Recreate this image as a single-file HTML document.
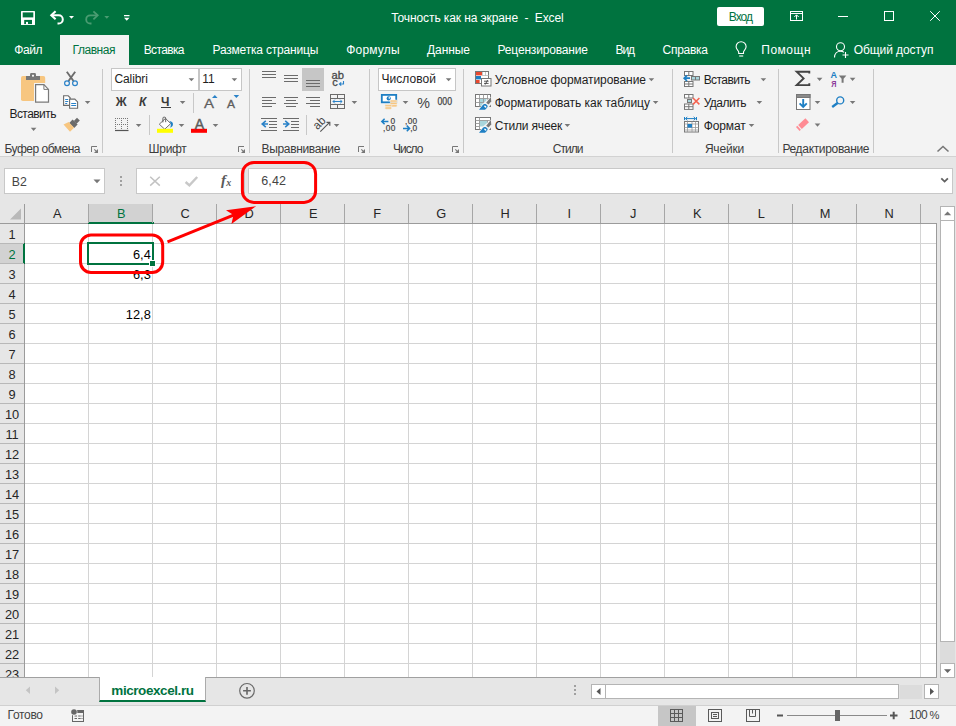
<!DOCTYPE html><html><head><meta charset="utf-8"><title>Excel</title><style>
*{margin:0;padding:0;box-sizing:border-box}
html,body{width:956px;height:726px;overflow:hidden;background:#fff}
body{font-family:"Liberation Sans",sans-serif;font-size:12px;color:#262626;position:relative}
.a{position:absolute}
.t{position:absolute;white-space:pre}
.sep{position:absolute;width:1px;background:#c8c8c8}
.ch{position:absolute;top:204px;height:19px;line-height:19px;text-align:center}
svg{position:absolute;left:0;top:0;overflow:visible}
</style></head><body>
<div class="a" style="left:0;top:0;width:956px;height:65px;background:#00733f"></div>
<div class="a" style="left:60px;top:35px;width:69px;height:30px;background:#f3f3f3"></div>
<div class="t" style="left:391.25px;top:11.84px;font-size:12px;line-height:12px;color:#fff;letter-spacing:-0.098px">Точность как на экране  -  Excel</div>
<div class="a" style="left:717px;top:7px;width:47px;height:19px;background:#fff;border-radius:2px"></div>
<div class="t" style="left:728.75px;top:11.14px;font-size:12px;line-height:12px;color:#00733f;letter-spacing:-0.965px">Вход</div>
<div class="t" style="left:14.25px;top:43.84px;font-size:12px;line-height:12px;color:#fff;letter-spacing:-0.417px">Файл</div>
<div class="t" style="left:72.50px;top:43.84px;font-size:12px;line-height:12px;color:#00733f;letter-spacing:-0.446px">Главная</div>
<div class="t" style="left:143.75px;top:43.84px;font-size:12px;line-height:12px;color:#fff;letter-spacing:-0.642px">Вставка</div>
<div class="t" style="left:212.50px;top:43.84px;font-size:12px;line-height:12px;color:#fff;letter-spacing:-0.194px">Разметка страницы</div>
<div class="t" style="left:346.25px;top:43.84px;font-size:12px;line-height:12px;color:#fff;letter-spacing:0.172px">Формулы</div>
<div class="t" style="left:427.00px;top:43.84px;font-size:12px;line-height:12px;color:#fff;letter-spacing:-0.070px">Данные</div>
<div class="t" style="left:497.50px;top:43.84px;font-size:12px;line-height:12px;color:#fff;letter-spacing:-0.166px">Рецензирование</div>
<div class="t" style="left:615.50px;top:43.84px;font-size:12px;line-height:12px;color:#fff;letter-spacing:-1.104px">Вид</div>
<div class="t" style="left:662.50px;top:43.84px;font-size:12px;line-height:12px;color:#fff;letter-spacing:-0.262px">Справка</div>
<div class="t" style="left:761.25px;top:43.84px;font-size:12px;line-height:12px;color:#fff;letter-spacing:0.506px">Помощн</div>
<div class="t" style="left:853.80px;top:43.84px;font-size:12px;line-height:12px;color:#fff;letter-spacing:-0.084px">Общий доступ</div>
<div class="a" style="left:0;top:65px;width:956px;height:92px;background:#f3f3f3;border-bottom:1px solid #d2d2d2"></div>
<div class="sep" style="left:102px;top:69px;height:84px"></div>
<div class="sep" style="left:249px;top:69px;height:84px"></div>
<div class="sep" style="left:369px;top:69px;height:84px"></div>
<div class="sep" style="left:463px;top:69px;height:84px"></div>
<div class="sep" style="left:672px;top:69px;height:84px"></div>
<div class="sep" style="left:778px;top:69px;height:84px"></div>
<div class="sep" style="left:873px;top:69px;height:84px"></div>
<div class="sep" style="left:193px;top:93px;height:20px"></div>
<div class="sep" style="left:149px;top:115px;height:20px"></div>
<div class="sep" style="left:306px;top:115px;height:20px"></div>
<div class="t" style="left:4.40px;top:142.84px;font-size:12px;line-height:12px;color:#3c3c3c;letter-spacing:-0.494px">Буфер обмена</div>
<div class="t" style="left:148.60px;top:142.84px;font-size:12px;line-height:12px;color:#3c3c3c;letter-spacing:-0.320px">Шрифт</div>
<div class="t" style="left:261.50px;top:142.84px;font-size:12px;line-height:12px;color:#3c3c3c;letter-spacing:-0.336px">Выравнивание</div>
<div class="t" style="left:393.00px;top:142.84px;font-size:12px;line-height:12px;color:#3c3c3c;letter-spacing:-1.028px">Число</div>
<div class="t" style="left:552.70px;top:142.84px;font-size:12px;line-height:12px;color:#3c3c3c;letter-spacing:-0.942px">Стили</div>
<div class="t" style="left:704.90px;top:142.84px;font-size:12px;line-height:12px;color:#3c3c3c;letter-spacing:-0.189px">Ячейки</div>
<div class="t" style="left:782.40px;top:142.84px;font-size:12px;line-height:12px;color:#3c3c3c;letter-spacing:-0.331px">Редактирование</div>
<div class="t" style="left:9.50px;top:107.54px;font-size:12px;line-height:12px;color:#1e1e1e;letter-spacing:-0.566px">Вставить</div>
<div class="a" style="left:111px;top:68px;width:88px;height:23px;background:#fff;border:1px solid #c6c6c6"></div>
<div class="a" style="left:199px;top:68px;width:43px;height:23px;background:#fff;border:1px solid #c6c6c6"></div>
<div class="a" style="left:378px;top:68px;width:78px;height:23px;background:#fff;border:1px solid #c6c6c6"></div>
<div class="t" style="left:114.40px;top:73.44px;font-size:12px;line-height:12px;color:#1e1e1e;letter-spacing:-0.084px">Calibri</div>
<div class="t" style="left:202.20px;top:73.44px;font-size:12px;line-height:12px;color:#1e1e1e;letter-spacing:0.000px">11</div>
<div class="t" style="left:381.50px;top:73.44px;font-size:12px;line-height:12px;color:#1e1e1e;letter-spacing:0.053px">Числовой</div>
<div class="t" style="left:115.70px;top:95.84px;font-size:12px;line-height:12px;color:#3b3b3b;letter-spacing:2.155px;font-weight:bold">Ж</div>
<div class="t" style="left:139.00px;top:95.84px;font-size:12px;line-height:12px;color:#3b3b3b;letter-spacing:1.024px;font-weight:bold;font-style:italic">К</div>
<div class="t" style="left:161.00px;top:95.84px;font-size:12px;line-height:12px;color:#3b3b3b;letter-spacing:1.168px;font-weight:bold">Ч</div>
<div class="a" style="left:161px;top:107px;width:10px;height:1px;background:#3b3b3b"></div>
<div class="t" style="left:494.70px;top:73.84px;font-size:12px;line-height:12px;color:#1e1e1e;letter-spacing:-0.061px">Условное форматирование</div>
<div class="t" style="left:494.70px;top:96.84px;font-size:12px;line-height:12px;color:#1e1e1e;letter-spacing:-0.038px">Форматировать как таблицу</div>
<div class="t" style="left:494.70px;top:119.84px;font-size:12px;line-height:12px;color:#1e1e1e;letter-spacing:-0.175px">Стили ячеек</div>
<div class="t" style="left:703.70px;top:73.84px;font-size:12px;line-height:12px;color:#1e1e1e;letter-spacing:-0.580px">Вставить</div>
<div class="t" style="left:703.70px;top:96.84px;font-size:12px;line-height:12px;color:#1e1e1e;letter-spacing:-0.502px">Удалить</div>
<div class="t" style="left:703.70px;top:119.84px;font-size:12px;line-height:12px;color:#1e1e1e;letter-spacing:-0.105px">Формат</div>
<div class="a" style="left:0;top:157px;width:956px;height:47px;background:#e6e6e6"></div>
<div class="a" style="left:4px;top:168px;width:101px;height:26px;background:#fff;border:1px solid #c8c8c8"></div>
<div class="t" style="left:11.80px;top:175.59px;font-size:12.3px;line-height:12.3px;color:#444;letter-spacing:0.000px">B2</div>
<div class="a" style="left:136px;top:168px;width:109px;height:26px;background:#fff;border:1px solid #c8c8c8"></div>
<div class="a" style="left:248px;top:168px;width:705px;height:26px;background:#fff;border:1px solid #c8c8c8"></div>
<div class="t" style="left:261.20px;top:175.42px;font-size:12.5px;line-height:12.5px;color:#444;letter-spacing:0.158px">6,42</div>
<div class="a" style="left:0;top:204px;width:956px;height:473px;background:#e6e6e6"></div>
<div class="a" style="left:25px;top:224px;width:912px;height:453px;background-color:#fff;background-image:linear-gradient(to right,#d4d4d4 1px,transparent 1px),linear-gradient(to bottom,#d4d4d4 1px,transparent 1px);background-size:64px 20px,64px 20px;background-position:63px 0,0 19px"></div>
<div class="a" style="left:0;top:223px;width:937px;height:1px;background:#9b9b9b"></div>
<div class="a" style="left:24px;top:204px;width:1px;height:473px;background:#9b9b9b"></div>
<div class="a" style="left:936px;top:223px;width:1px;height:454px;background:#9b9b9b"></div>
<div class="a" style="left:89px;top:204px;width:63px;height:19px;background:#d2d2d2"></div>
<div class="a" style="left:88px;top:222px;width:66px;height:2px;background:#00733f"></div>
<div class="a" style="left:0;top:244px;width:24px;height:19px;background:#d2d2d2"></div>
<div class="a" style="left:23px;top:243px;width:2px;height:21px;background:#00733f"></div>
<div class="a" style="left:27.20px;top:207.86px;width:60px;text-align:center;font-size:12.8px;line-height:12.8px;color:#262626;white-space:pre">A</div>
<div class="a" style="left:88px;top:204px;width:1px;height:19px;background:#a6a6a6"></div>
<div class="a" style="left:91.20px;top:207.86px;width:60px;text-align:center;font-size:12.8px;line-height:12.8px;color:#00733f;white-space:pre">B</div>
<div class="a" style="left:152px;top:204px;width:1px;height:19px;background:#a6a6a6"></div>
<div class="a" style="left:155.20px;top:207.86px;width:60px;text-align:center;font-size:12.8px;line-height:12.8px;color:#262626;white-space:pre">C</div>
<div class="a" style="left:216px;top:204px;width:1px;height:19px;background:#a6a6a6"></div>
<div class="a" style="left:219.20px;top:207.86px;width:60px;text-align:center;font-size:12.8px;line-height:12.8px;color:#262626;white-space:pre">D</div>
<div class="a" style="left:280px;top:204px;width:1px;height:19px;background:#a6a6a6"></div>
<div class="a" style="left:283.20px;top:207.86px;width:60px;text-align:center;font-size:12.8px;line-height:12.8px;color:#262626;white-space:pre">E</div>
<div class="a" style="left:344px;top:204px;width:1px;height:19px;background:#a6a6a6"></div>
<div class="a" style="left:347.20px;top:207.86px;width:60px;text-align:center;font-size:12.8px;line-height:12.8px;color:#262626;white-space:pre">F</div>
<div class="a" style="left:408px;top:204px;width:1px;height:19px;background:#a6a6a6"></div>
<div class="a" style="left:411.20px;top:207.86px;width:60px;text-align:center;font-size:12.8px;line-height:12.8px;color:#262626;white-space:pre">G</div>
<div class="a" style="left:472px;top:204px;width:1px;height:19px;background:#a6a6a6"></div>
<div class="a" style="left:475.20px;top:207.86px;width:60px;text-align:center;font-size:12.8px;line-height:12.8px;color:#262626;white-space:pre">H</div>
<div class="a" style="left:536px;top:204px;width:1px;height:19px;background:#a6a6a6"></div>
<div class="a" style="left:539.20px;top:207.86px;width:60px;text-align:center;font-size:12.8px;line-height:12.8px;color:#262626;white-space:pre">I</div>
<div class="a" style="left:600px;top:204px;width:1px;height:19px;background:#a6a6a6"></div>
<div class="a" style="left:603.20px;top:207.86px;width:60px;text-align:center;font-size:12.8px;line-height:12.8px;color:#262626;white-space:pre">J</div>
<div class="a" style="left:664px;top:204px;width:1px;height:19px;background:#a6a6a6"></div>
<div class="a" style="left:667.20px;top:207.86px;width:60px;text-align:center;font-size:12.8px;line-height:12.8px;color:#262626;white-space:pre">K</div>
<div class="a" style="left:728px;top:204px;width:1px;height:19px;background:#a6a6a6"></div>
<div class="a" style="left:731.20px;top:207.86px;width:60px;text-align:center;font-size:12.8px;line-height:12.8px;color:#262626;white-space:pre">L</div>
<div class="a" style="left:792px;top:204px;width:1px;height:19px;background:#a6a6a6"></div>
<div class="a" style="left:795.20px;top:207.86px;width:60px;text-align:center;font-size:12.8px;line-height:12.8px;color:#262626;white-space:pre">M</div>
<div class="a" style="left:856px;top:204px;width:1px;height:19px;background:#a6a6a6"></div>
<div class="a" style="left:859.20px;top:207.86px;width:60px;text-align:center;font-size:12.8px;line-height:12.8px;color:#262626;white-space:pre">N</div>
<div class="a" style="left:920px;top:204px;width:1px;height:19px;background:#a6a6a6"></div>
<div class="a" style="left:0.10px;top:228.86px;width:24px;text-align:center;font-size:12.8px;line-height:12.8px;color:#262626;white-space:pre">1</div>
<div class="a" style="left:0;top:243px;width:24px;height:1px;background:#b8b8b8"></div>
<div class="a" style="left:0.10px;top:248.86px;width:24px;text-align:center;font-size:12.8px;line-height:12.8px;color:#00733f;white-space:pre">2</div>
<div class="a" style="left:0;top:263px;width:24px;height:1px;background:#b8b8b8"></div>
<div class="a" style="left:0.10px;top:268.86px;width:24px;text-align:center;font-size:12.8px;line-height:12.8px;color:#262626;white-space:pre">3</div>
<div class="a" style="left:0;top:283px;width:24px;height:1px;background:#b8b8b8"></div>
<div class="a" style="left:0.10px;top:288.86px;width:24px;text-align:center;font-size:12.8px;line-height:12.8px;color:#262626;white-space:pre">4</div>
<div class="a" style="left:0;top:303px;width:24px;height:1px;background:#b8b8b8"></div>
<div class="a" style="left:0.10px;top:308.86px;width:24px;text-align:center;font-size:12.8px;line-height:12.8px;color:#262626;white-space:pre">5</div>
<div class="a" style="left:0;top:323px;width:24px;height:1px;background:#b8b8b8"></div>
<div class="a" style="left:0.10px;top:328.86px;width:24px;text-align:center;font-size:12.8px;line-height:12.8px;color:#262626;white-space:pre">6</div>
<div class="a" style="left:0;top:343px;width:24px;height:1px;background:#b8b8b8"></div>
<div class="a" style="left:0.10px;top:348.86px;width:24px;text-align:center;font-size:12.8px;line-height:12.8px;color:#262626;white-space:pre">7</div>
<div class="a" style="left:0;top:363px;width:24px;height:1px;background:#b8b8b8"></div>
<div class="a" style="left:0.10px;top:368.86px;width:24px;text-align:center;font-size:12.8px;line-height:12.8px;color:#262626;white-space:pre">8</div>
<div class="a" style="left:0;top:383px;width:24px;height:1px;background:#b8b8b8"></div>
<div class="a" style="left:0.10px;top:388.86px;width:24px;text-align:center;font-size:12.8px;line-height:12.8px;color:#262626;white-space:pre">9</div>
<div class="a" style="left:0;top:403px;width:24px;height:1px;background:#b8b8b8"></div>
<div class="a" style="left:0.10px;top:408.86px;width:24px;text-align:center;font-size:12.8px;line-height:12.8px;color:#262626;white-space:pre">10</div>
<div class="a" style="left:0;top:423px;width:24px;height:1px;background:#b8b8b8"></div>
<div class="a" style="left:0.10px;top:428.86px;width:24px;text-align:center;font-size:12.8px;line-height:12.8px;color:#262626;white-space:pre">11</div>
<div class="a" style="left:0;top:443px;width:24px;height:1px;background:#b8b8b8"></div>
<div class="a" style="left:0.10px;top:448.86px;width:24px;text-align:center;font-size:12.8px;line-height:12.8px;color:#262626;white-space:pre">12</div>
<div class="a" style="left:0;top:463px;width:24px;height:1px;background:#b8b8b8"></div>
<div class="a" style="left:0.10px;top:468.86px;width:24px;text-align:center;font-size:12.8px;line-height:12.8px;color:#262626;white-space:pre">13</div>
<div class="a" style="left:0;top:483px;width:24px;height:1px;background:#b8b8b8"></div>
<div class="a" style="left:0.10px;top:488.86px;width:24px;text-align:center;font-size:12.8px;line-height:12.8px;color:#262626;white-space:pre">14</div>
<div class="a" style="left:0;top:503px;width:24px;height:1px;background:#b8b8b8"></div>
<div class="a" style="left:0.10px;top:508.86px;width:24px;text-align:center;font-size:12.8px;line-height:12.8px;color:#262626;white-space:pre">15</div>
<div class="a" style="left:0;top:523px;width:24px;height:1px;background:#b8b8b8"></div>
<div class="a" style="left:0.10px;top:528.86px;width:24px;text-align:center;font-size:12.8px;line-height:12.8px;color:#262626;white-space:pre">16</div>
<div class="a" style="left:0;top:543px;width:24px;height:1px;background:#b8b8b8"></div>
<div class="a" style="left:0.10px;top:548.86px;width:24px;text-align:center;font-size:12.8px;line-height:12.8px;color:#262626;white-space:pre">17</div>
<div class="a" style="left:0;top:563px;width:24px;height:1px;background:#b8b8b8"></div>
<div class="a" style="left:0.10px;top:568.86px;width:24px;text-align:center;font-size:12.8px;line-height:12.8px;color:#262626;white-space:pre">18</div>
<div class="a" style="left:0;top:583px;width:24px;height:1px;background:#b8b8b8"></div>
<div class="a" style="left:0.10px;top:588.86px;width:24px;text-align:center;font-size:12.8px;line-height:12.8px;color:#262626;white-space:pre">19</div>
<div class="a" style="left:0;top:603px;width:24px;height:1px;background:#b8b8b8"></div>
<div class="a" style="left:0.10px;top:608.86px;width:24px;text-align:center;font-size:12.8px;line-height:12.8px;color:#262626;white-space:pre">20</div>
<div class="a" style="left:0;top:623px;width:24px;height:1px;background:#b8b8b8"></div>
<div class="a" style="left:0.10px;top:628.86px;width:24px;text-align:center;font-size:12.8px;line-height:12.8px;color:#262626;white-space:pre">21</div>
<div class="a" style="left:0;top:643px;width:24px;height:1px;background:#b8b8b8"></div>
<div class="a" style="left:0.10px;top:648.86px;width:24px;text-align:center;font-size:12.8px;line-height:12.8px;color:#262626;white-space:pre">22</div>
<div class="a" style="left:0;top:663px;width:24px;height:1px;background:#b8b8b8"></div>
<div class="a" style="left:0.10px;top:668.86px;width:24px;text-align:center;font-size:12.8px;line-height:12.8px;color:#262626;white-space:pre">23</div>
<div class="a" style="left:0;top:683px;width:24px;height:1px;background:#b8b8b8"></div>
<div class="a" style="left:89.20px;top:248.86px;width:61.6px;text-align:right;font-size:12.8px;line-height:12.8px;color:#000;white-space:pre">6,4</div>
<div class="a" style="left:89.20px;top:268.86px;width:61.6px;text-align:right;font-size:12.8px;line-height:12.8px;color:#000;white-space:pre">6,3</div>
<div class="a" style="left:89.20px;top:308.86px;width:61.6px;text-align:right;font-size:12.8px;line-height:12.8px;color:#000;white-space:pre">12,8</div>
<div class="a" style="left:87px;top:242px;width:67px;height:23px;border:2px solid #00733f"></div>
<div class="a" style="left:149px;top:260px;width:7px;height:7px;background:#fff"></div>
<div class="a" style="left:150px;top:261px;width:5px;height:5px;background:#00733f"></div>
<div class="a" style="left:0;top:677px;width:956px;height:28px;background:#e6e6e6"></div>
<div class="a" style="left:0;top:677px;width:937px;height:1px;background:#a0a0a0"></div>
<div class="a" style="left:99px;top:677px;width:107px;height:25px;background:#fff;border-left:1px solid #ababab;border-right:1px solid #ababab;border-bottom:2px solid #00733f"></div>
<div class="t" style="left:111.30px;top:683.97px;font-size:13.5px;line-height:13.5px;color:#00733f;letter-spacing:-0.424px;font-weight:bold">microexcel.ru</div>
<div class="a" style="left:0;top:705px;width:956px;height:21px;background:#f3f3f3;border-top:1px solid #d0d0d0"></div>
<div class="t" style="left:7.60px;top:708.84px;font-size:12px;line-height:12px;color:#444;letter-spacing:-0.330px">Готово</div>
<div class="t" style="left:909.00px;top:708.84px;font-size:12px;line-height:12px;color:#444;letter-spacing:-0.710px">100</div>
<div class="t" style="left:929.60px;top:709.52px;font-size:11.2px;line-height:11.2px;color:#444;letter-spacing:0.000px">%</div>
<svg width="956" height="726" viewBox="0 0 956 726">
<defs>
  <path id="dd" d="M0 0h5.600l-2.800 3.100z" fill="#777"/>
  <g id="ln"><path d="M0.500 6v-5.500h5.500" fill="none" stroke="#777" stroke-width="1"/><path d="M3.300 3.300l3 3" fill="none" stroke="#777" stroke-width="1.100"/><path d="M7 3v4h-4z" fill="#777"/></g>
</defs>
<!-- ===== clipboard group ===== -->
<rect x="21" y="76" width="24.200" height="25" rx="1.800" fill="#f7c680"/>
<rect x="26" y="76" width="14" height="4" fill="#777"/>
<path d="M30 76.500v-2a1.400 1.400 0 0 1 1.400-1.400h3.200a1.400 1.400 0 0 1 1.400 1.400v2z" fill="#777"/>
<rect x="32" y="74.800" width="2" height="1.800" fill="#f3f3f3"/>
<rect x="34" y="83" width="16" height="20.800" fill="#f3f3f3"/>
<path d="M35.600 84.600h8.300l4.600 4.800v12.800h-12.900z" fill="#fff" stroke="#7a7a7a" stroke-width="1.200"/>
<path d="M43.900 84.600v4.800h4.600" fill="none" stroke="#7a7a7a" stroke-width="1"/>
<use href="#dd" x="30.800" y="127.800"/>
<!-- scissors -->
<path d="M66.800 71.800l6.700 9.200M75.200 71.800l-6.700 9.200" stroke="#6b6b6b" stroke-width="1.900" fill="none"/>
<circle cx="67" cy="83.300" r="2.400" fill="none" stroke="#2a82c8" stroke-width="1.200"/>
<circle cx="75" cy="83.300" r="2.400" fill="none" stroke="#2a82c8" stroke-width="1.200"/>
<!-- copy -->
<path d="M63.600 95.800h4.600l2 2v7.600h-6.600z" fill="#fff" stroke="#6b6b6b" stroke-width="1.100"/>
<path d="M65.200 99.500h3M65.200 101.500h3M65.200 103.500h2" stroke="#2a82c8" stroke-width="1" fill="none"/>
<path d="M69.600 99.100h5.200l2.800 2.800v6.300h-8z" fill="#fff" stroke="#6b6b6b" stroke-width="1.100"/>
<path d="M71.200 103.500h5M71.200 105.500h5" stroke="#2a82c8" stroke-width="1" fill="none"/>
<use href="#dd" x="84.800" y="101"/>
<!-- format painter -->
<path d="M77 117.800l2.800 2.800l-3.200 3.200l-2.800-2.800z" fill="#6b6b6b"/>
<path d="M72.600 119.600l5 5l-3.400 3.400l-5-5z" fill="#6b6b6b"/>
<path d="M63.500 124.500l5.200-2.400l5.400 5.600l-4.100 4z" fill="#f7c680"/>
<!-- launchers -->
<use href="#ln" x="91" y="146"/>
<use href="#ln" x="238" y="146"/>
<use href="#ln" x="358" y="146"/>
<use href="#ln" x="452" y="146"/>

<!-- ===== font group ===== -->
<use href="#dd" x="188.600" y="78.200"/>
<use href="#dd" x="231.600" y="78.200"/>
<use href="#dd" x="179.800" y="101"/>
<path d="M212 97.900h5.600l-2.800-3z" fill="#2a82c8"/>
<path d="M233.600 95h5.600l-2.800 3z" fill="#2a82c8"/>
<!-- borders icon -->
<g stroke="#777" stroke-width="1" stroke-dasharray="1 1" fill="none">
  <path d="M115 118.500h13.500M115 124.500h13.500M115.500 118v11M121.500 118v11M127.500 118v11"/>
</g>
<path d="M115 130.500h13.500" stroke="#555" stroke-width="1.200"/>
<use href="#dd" x="135.800" y="124"/>
<!-- fill bucket -->
<path d="M165.500 118.400l5.200 5.200l-6 5.600l-5.400-5z" fill="#fff" stroke="#707070" stroke-width="1"/>
<path d="M162.900 122.400v-4.200a1 1 0 0 1 1-1h0.800a1 1 0 0 1 1 1v4" fill="none" stroke="#606060" stroke-width="1"/>
<path d="M169.400 121.100c2.600 0.300 4 2 3.500 4c-0.400 1.500-1.600 2.200-2.700 2.700c0.400-1.600 0.900-2.700 0.600-3.800c-0.200-1-0.700-2-1.400-2.900z" fill="#1e7fc4"/>
<rect x="157" y="128.800" width="16" height="4" fill="#ffff00"/>
<use href="#dd" x="178.700" y="124"/>
<!-- font color -->
<rect x="191" y="128.800" width="16" height="4" fill="#ff0000"/>
<use href="#dd" x="212.700" y="124"/>

<!-- ===== alignment group ===== -->
<rect x="302" y="68" width="22" height="23" fill="#c6c6c6"/>
<g stroke="#6b6b6b" stroke-width="1" fill="none">
  <path d="M262 71.500h14M262 74.500h14M262 77.500h14"/>
  <path d="M284 75.500h14M284 78.500h14M284 81.500h14"/>
  <path d="M306 80.500h14M306 83.500h14M306 86.500h14"/>
  <path d="M262 97.500h14M262 100.500h10M262 103.500h14M262 106.500h10"/>
  <path d="M284 97.500h14M286 100.500h10M284 103.500h14M286 106.500h10"/>
  <path d="M306 97.500h14M310 100.500h10M306 103.500h14M310 106.500h10"/>
  <!-- indent -->
  <path d="M261 118.500h16M269 121.500h8M269 124.500h8M269 127.500h8M261 130.500h16"/>
  <path d="M283 118.500h16M291 121.500h8M291 124.500h8M291 127.500h8M283 130.500h16"/>
  <!-- merge -->
  <rect x="330.500" y="94.500" width="14" height="14"/>
  <path d="M330.500 98.500h14M330.500 104.500h14M337.500 94.500v4M337.500 104.500v4"/>
</g>
<path d="M265.800 120.800l-3.600 3.200l3.600 3.200M262.500 124h5.500" stroke="#2a82c8" stroke-width="1.600" fill="none"/>
<path d="M285.200 120.800l3.600 3.200l-3.600 3.200M283 124h5.500" stroke="#2a82c8" stroke-width="1.600" fill="none"/>
<path d="M333 101.500h9M334.800 99.700l-1.800 1.800l1.800 1.800M340.200 99.700l1.800 1.800l-1.800 1.800" stroke="#2a82c8" stroke-width="1" fill="none"/>
<use href="#dd" x="351.600" y="101"/>
<!-- wrap text -->
<text x="331.500" y="79.200" font-family="Liberation Sans, sans-serif" font-size="11" fill="#4a4a4a" stroke="#4a4a4a" stroke-width="0.300" textLength="12.500" lengthAdjust="spacingAndGlyphs">ab</text>
<text x="332.300" y="86.200" font-family="Liberation Sans, sans-serif" font-size="11" fill="#4a4a4a" stroke="#4a4a4a" stroke-width="0.300">c</text>
<path d="M343.500 81v3h-4M341.200 82.300l-1.800 1.700l1.800 1.700" stroke="#2a82c8" stroke-width="1.100" fill="none"/>
<!-- orientation -->
<g transform="translate(317.500 130.200) rotate(-45)">
  <text x="0" y="0" font-family="Liberation Sans, sans-serif" font-size="12" fill="#444" textLength="12.600" lengthAdjust="spacingAndGlyphs">ab</text>
</g>
<path d="M320.300 131.700l9.300-9.300" stroke="#555" stroke-width="1.100" fill="none"/>
<path d="M326.500 122.400h3.300v3.300" stroke="#555" stroke-width="1.200" fill="none"/>
<use href="#dd" x="333.800" y="124"/>
</svg>

<svg width="956" height="726" viewBox="0 0 956 726" font-family="Liberation Sans, sans-serif">
<!-- ===== font A icons ===== -->
<text x="204" y="107.500" font-size="13.500" fill="#5e5e5e" stroke="#5e5e5e" stroke-width="0.300" textLength="10" lengthAdjust="spacingAndGlyphs">A</text>
<text x="227" y="107.500" font-size="10" fill="#5e5e5e" stroke="#5e5e5e" stroke-width="0.300" textLength="8" lengthAdjust="spacingAndGlyphs">A</text>
<text x="194.700" y="128.900" font-size="14" fill="#5a5a5a" stroke="#5a5a5a" stroke-width="0.400" textLength="9.400" lengthAdjust="spacingAndGlyphs">A</text>

<!-- ===== number group ===== -->
<use href="#dd" x="445.800" y="78.200"/>
<rect x="381.800" y="94.900" width="14.400" height="7.400" fill="#fff" stroke="#1e7fc4" stroke-width="1.800"/>
<circle cx="388.700" cy="98.400" r="2.100" fill="#1e7fc4"/>
<circle cx="389.300" cy="97.900" r="0.800" fill="#fff"/>
<g fill="#f7c680" stroke="#f3f3f3" stroke-width="0.600">
  <rect x="390" y="100" width="7.200" height="2.300" rx="1.100"/>
  <rect x="390" y="102.300" width="7.200" height="2.300" rx="1.100"/>
  <rect x="390" y="104.600" width="7.200" height="2.300" rx="1.100"/>
  <rect x="384.800" y="104.600" width="7" height="2.300" rx="1.100"/>
  <rect x="384.800" y="106.900" width="7" height="2.300" rx="1.100"/>
</g>
<use href="#dd" x="402.700" y="101"/>
<text x="417.300" y="107.900" font-size="15.500" fill="#444" textLength="12.700" lengthAdjust="spacingAndGlyphs">%</text>
<text x="437.500" y="105" font-size="10.400" fill="#444" stroke="#444" stroke-width="0.250" textLength="14.600" lengthAdjust="spacingAndGlyphs">000</text>
<!-- inc/dec decimal -->
<g font-size="8.300" fill="#444" stroke="#444" stroke-width="0.200">
  <text x="390.500" y="123.900">0</text>
  <text x="383" y="131.200" textLength="12.400" lengthAdjust="spacing">,00</text>
  <text x="405" y="123.900" textLength="12.200" lengthAdjust="spacing">,00</text>
  <text x="410.200" y="131.200" textLength="7" lengthAdjust="spacing">,0</text>
</g>
<path d="M388.400 121.500h-6.500M384.600 118.700l-2.800 2.800l2.800 2.800" stroke="#1e7fc4" stroke-width="1.500" fill="none"/>
<path d="M403 128.400h6.500M406.800 125.600l2.800 2.800l-2.800 2.800" stroke="#1e7fc4" stroke-width="1.500" fill="none"/>

<!-- ===== styles group ===== -->
<!-- conditional formatting -->
<rect x="475.500" y="71.500" width="13" height="12" fill="#fff" stroke="#777"/>
<rect x="476" y="72" width="6" height="3.400" fill="#e8482f"/>
<rect x="476" y="76" width="5" height="3.400" fill="#1e7fc4"/>
<rect x="476" y="80" width="3.600" height="3" fill="#e8482f"/>
<path d="M482.500 72v4M485.500 72v4M482.500 75.500h6" stroke="#bbb" stroke-width="0.800" fill="none"/>
<rect x="481.500" y="78.500" width="9.500" height="7.500" fill="#fff" stroke="#777"/>
<path d="M484 81.200h4.600M484 83.400h4.600M487.600 80l-2.400 4.600" stroke="#444" stroke-width="0.900" fill="none"/>
<!-- format as table -->
<g id="tbl">
<rect x="475.500" y="94.500" width="15" height="12" fill="#fff" stroke="#777"/>
<rect x="479" y="98.500" width="7.500" height="7.500" fill="#a9d5dc"/>
<path d="M475.500 98.500h15M475.500 102.500h15M479.500 94.500v12M483.500 94.500v12M487.500 94.500v12" stroke="#999" stroke-width="0.900" fill="none"/>
</g>
<g id="brush">
<path d="M492.300 95.500l0.300 7l-4 5l-5.600 3.600h-5.400l5-7.300z" fill="#f3f3f3"/>
<path d="M490.900 97.100l0.300 4.400l-2.700 3.100l-2.300-1.900z" fill="#777"/>
<path d="M479 109.800l3.600-4.600c0.900-1.100 2.300-1.700 3.400-1c1.300 0.800 2 1.800 1.500 2.800c-0.600 1.200-1.500 2-2.500 2.800z" fill="#1e7fc4"/>
<ellipse cx="485.300" cy="106.600" rx="1.300" ry="0.800" fill="#fff" transform="rotate(40 485.300 106.600)"/>
</g>
<!-- cell styles -->
<rect x="475.500" y="117.500" width="15" height="12" fill="#fff" stroke="#777"/>
<rect x="479.500" y="120.500" width="8" height="6" fill="#a9d5dc"/>
<path d="M475.500 120.500h15M479.500 117.500v12M475.500 123.500h4M475.500 126.500h4M487.500 120.500v9" stroke="#999" stroke-width="0.900" fill="none"/>
<use href="#brush" y="23"/>
<use href="#dd" x="648.600" y="78.200"/>
<use href="#dd" x="652.800" y="101"/>
<use href="#dd" x="564.600" y="124"/>

<!-- ===== cells group ===== -->
<g fill="#fff" stroke="#777" stroke-width="1">
  <!-- insert -->
  <rect x="684.500" y="71.500" width="8.500" height="4"/><path d="M688.800 71.500v4"/>
  <rect x="684.500" y="81.500" width="8.500" height="5"/><path d="M688.800 81.500v5M684.500 84h8.500" fill="none"/>
  <rect x="691.500" y="76.500" width="8" height="3.500" fill="#a9d5dc"/><path d="M695.500 76.500v3.500"/>
  <!-- delete -->
  <rect x="684.500" y="94.500" width="8.500" height="3.500"/><path d="M688.800 94.500v3.500"/>
  <rect x="687.500" y="99.500" width="4" height="3" fill="#a9d5dc"/>
  <rect x="684.500" y="104" width="8.500" height="5.400"/><path d="M688.800 104v5.400M684.500 106.700h8.500" fill="none"/>
</g>
<path d="M690 78.200h-5.600M687 75.400l-2.800 2.800l2.800 2.800" stroke="#1e7fc4" stroke-width="1.700" fill="none"/>
<path d="M693 98l6.400 6.400M699.400 98l-6.400 6.400" stroke="#f4624f" stroke-width="1.500" fill="none"/>
<!-- format -->
<path d="M684.500 117v3.200M696.500 117v3.200M685.500 118.600h10M687.300 116.800l-1.800 1.800l1.800 1.800M693.700 116.800l1.800 1.800l-1.800 1.800" stroke="#1e7fc4" stroke-width="1" fill="none"/>
<rect x="684.500" y="121.500" width="14" height="10.500" fill="#fff" stroke="#777"/>
<path d="M684.500 124h14M684.500 127.500h14M684.500 130h14M687.500 121.500v10.500M692 121.500v10.500M695.500 121.500v10.500" stroke="#999" stroke-width="0.800" fill="none"/>
<rect x="687.500" y="124" width="4.500" height="3.600" fill="#1e7fc4"/>
<use href="#dd" x="760.600" y="78.200"/>
<use href="#dd" x="756.600" y="101"/>
<use href="#dd" x="748.700" y="124"/>

<!-- ===== editing group ===== -->
<path d="M809.300 73.600v-1.800h-12.600l6.900 6.600l-6.900 6.700h12.600v-1.800" fill="none" stroke="#444" stroke-width="1.900" stroke-linejoin="miter"/>
<use href="#dd" x="816.800" y="77.800"/>
<text x="830.500" y="77.800" font-size="9" font-weight="bold" fill="#1e7fc4" textLength="6.500" lengthAdjust="spacingAndGlyphs">A</text>
<text x="831.300" y="86.700" font-size="8.500" font-weight="bold" fill="#8c3c9a" textLength="5.200" lengthAdjust="spacingAndGlyphs">Я</text>
<path d="M838.800 75.600h7.600l-2.800 3.200v4h-2v-4z" fill="#777"/>
<use href="#dd" x="849.800" y="77.800"/>
<!-- fill -->
<rect x="796.500" y="94.500" width="13.500" height="15" fill="#fff" stroke="#777"/>
<rect x="796.500" y="94.500" width="13.500" height="3" fill="#8a8a8a" stroke="#777"/>
<path d="M803.200 99v7.600M799.600 103.400l3.600 3.600l3.600-3.600" stroke="#1e7fc4" stroke-width="1.900" fill="none"/>
<use href="#dd" x="814.700" y="101"/>
<!-- find -->
<circle cx="840.200" cy="100.400" r="3.500" fill="none" stroke="#1e7fc4" stroke-width="1.400"/>
<path d="M837.600 103l-5.400 4" stroke="#1e7fc4" stroke-width="2.300" fill="none"/>
<use href="#dd" x="849.800" y="101"/>
<!-- eraser -->
<path d="M805.400 118.200l3.600 4l-7.200 6.800l-3.600-4z" fill="#ff8b94"/>
<path d="M797.300 125.700l3.600 4l-1.300 1.200l-3.600-4z" fill="#ff8b94"/>
<use href="#dd" x="814.700" y="123.600"/>
<!-- collapse ribbon caret -->
<path d="M937.500 151.500l5.500-5l5.500 5" stroke="#777" stroke-width="1.600" fill="none"/>
<!-- fx -->
<text x="221" y="185" font-family="Liberation Serif, serif" font-style="italic" font-weight="bold" font-size="15" fill="#5a5a5a">f</text>
<text x="226.300" y="185.700" font-family="Liberation Serif, serif" font-style="italic" font-weight="bold" font-size="10" fill="#5a5a5a">x</text>
</svg>

<svg width="956" height="726" viewBox="0 0 956 726">
<!-- ===== title bar icons ===== -->
<g fill="none" stroke="#fff" stroke-width="1.3">
  <!-- save (drawn below) -->
  <!-- undo -->
  <path d="M51.500 15.300h7.200a4.100 4.100 0 0 1 0 8.200h-1.200" stroke-width="2"/>
  <path d="M55.600 11.300l-4.300 4l4.300 4" stroke-width="2.100"/>
  <!-- window controls -->
  <path d="M838 16.5h10" stroke-width="1"/>
  <rect x="884.5" y="11.5" width="9" height="9" stroke-width="1"/>
  <path d="M930.2 11.2l9.6 9.6M939.8 11.2l-9.6 9.6" stroke-width="1"/>
  <!-- ribbon display options -->
  <rect x="790.5" y="11.5" width="12" height="9" stroke-width="1"/>
  <path d="M790.5 13.5h12" stroke-width="1"/>
  <path d="M796.5 19.5v-4.5M794.3 17l2.2-2.2l2.2 2.2" stroke-width="1"/>
  <!-- lightbulb -->
  <path d="M738.7 53.5v-1.6c0-1.2-2.6-2.6-2.6-5.2a5 5 0 0 1 10 0c0 2.6-2.6 4-2.6 5.2v1.6z" stroke-width="1.1"/>
  <path d="M739.2 56h4" stroke-width="1.1"/>
  <!-- share person -->
  <circle cx="840.5" cy="46.8" r="4" stroke-width="1.1"/>
  <path d="M834.5 57.5c0-4 2.6-6.3 6-6.3c1.5 0 2.6 0.4 3.5 1" stroke-width="1.1"/>
  <path d="M845.5 52v6M842.5 55h6" stroke-width="1.1"/>
</g>
<path d="M69 16h5l-2.5 2.8z" fill="#fff"/>
<rect x="21" y="11" width="14" height="14" rx="0.600" fill="#fff"/>
<rect x="22.700" y="12.400" width="10.600" height="5" fill="#00733f"/>
<rect x="24.200" y="19.900" width="7.800" height="4.200" fill="#00733f"/>
<rect x="26" y="21.900" width="2" height="2.300" fill="#fff"/>
<!-- redo (disabled) -->
<g fill="none" stroke="#4a9c72" stroke-width="1.8">
  <path d="M97.500 15.300h-7.200a4.100 4.100 0 0 0 0 8.200h1.200"/>
  <path d="M93.400 11.300l4.300 4l-4.300 4"/>
</g>
<path d="M104.3 16h5l-2.5 2.8z" fill="#4a9c72"/>
<!-- customize QAT -->
<path d="M124 15h5.5v1.2h-5.5zM124 17.8h5.5l-2.75 3z" fill="#fff"/>

<!-- ===== formula bar ===== -->
<path d="M93.5 179.5h7l-3.5 3.8z" fill="#777"/>
<g fill="#a0a0a0"><rect x="120" y="176" width="2" height="2"/><rect x="120" y="180" width="2" height="2"/><rect x="120" y="184" width="2" height="2"/></g>
<path d="M150.2 176.8l9.6 8.800M159.800 176.800l-9.600 8.800" stroke="#c2c2c2" stroke-width="1.500" fill="none"/>
<path d="M185.600 182l3.800 3.400l7.800-8.400" stroke="#c8c8c8" stroke-width="2.400" fill="none"/>
<path d="M941.300 178.300l3.300 3.300l3.300-3.300" stroke="#606060" stroke-width="1.800" fill="none"/>

<!-- ===== select-all triangle ===== -->
<path d="M21 208.5v11h-11z" fill="#b9b9b9"/>

<!-- ===== vertical scrollbar ===== -->
<rect x="940" y="642" width="15" height="22" fill="#dcdcdc"/>
<rect x="940.5" y="206.5" width="14" height="14" fill="#fff" stroke="#b4b4b4"/>
<path d="M944 215.300h7.200l-3.600-3.800z" fill="#777"/>
<rect x="940.5" y="220.5" width="14" height="421" fill="#fff" stroke="#b4b4b4"/>
<rect x="940.5" y="663.5" width="14" height="14" fill="#fff" stroke="#b4b4b4"/>
<path d="M944 669.200h7.200l-3.600 3.800z" fill="#666"/>

<!-- ===== sheet tab bar ===== -->
<path d="M30 686.500v7.500l-4.200-3.750z" fill="#c4c4c4"/>
<path d="M55 686.500v7.500l4.200-3.750z" fill="#c4c4c4"/>
<circle cx="247" cy="690.800" r="7.300" fill="none" stroke="#6a6a6a" stroke-width="1.200"/>
<path d="M243.100 690.800h7.800M247 686.900v7.800" stroke="#666" stroke-width="1.600" fill="none"/>
<g fill="#a0a0a0"><rect x="574" y="685" width="2" height="2"/><rect x="574" y="689" width="2" height="2"/><rect x="574" y="693" width="2" height="2"/></g>
<!-- horizontal scrollbar -->
<rect x="899.5" y="685" width="22.500" height="14" fill="#dcdcdc"/>
<rect x="591.5" y="684.5" width="14" height="14" fill="#fff" stroke="#b4b4b4"/>
<path d="M600.500 688v7l-4-3.500z" fill="#555"/>
<rect x="605.5" y="684.5" width="293" height="14" fill="#fff" stroke="#b4b4b4"/>
<rect x="924.5" y="684.5" width="14" height="14" fill="#fff" stroke="#b4b4b4"/>
<path d="M930 688v7l4-3.500z" fill="#555"/>

<!-- ===== status bar ===== -->
<!-- macro record icon -->
<rect x="72.500" y="710.500" width="11" height="11" fill="#f3f3f3" stroke="#666"/>
<rect x="77" y="710" width="7" height="3" fill="#666"/>
<path d="M74.500 716h2.500M78.200 716h2.500M74.500 718.500h2.500M78.200 718.500h2.500M81.500 716h1M81.500 718.500h1" stroke="#666" stroke-width="1" fill="none"/>
<circle cx="74" cy="712" r="3.400" fill="#f3f3f3"/>
<circle cx="74" cy="712" r="2.800" fill="#666"/>
<!-- view buttons -->
<rect x="658" y="706" width="38" height="20" fill="#c6c6c6"/>
<g fill="none" stroke="#5a5a5a" stroke-width="1">
  <rect x="670.5" y="709.5" width="12" height="12"/>
  <path d="M670.5 713.5h12M670.5 717.5h12M674.5 709.5v12M678.5 709.5v12"/>
  <rect x="708.5" y="709.5" width="13" height="12"/>
  <rect x="711.5" y="712.5" width="7" height="6"/>
  <path d="M713 714.5h4M713 716.5h4"/>
  <rect x="746.5" y="709.5" width="13" height="12"/>
  <path d="M749.5 709.5v7h6v-7M752.5 709.5v4"/>
</g>
<!-- zoom slider -->
<path d="M777 715.5h6" stroke="#555" stroke-width="2"/>
<path d="M787 715.5h100" stroke="#8a8a8a" stroke-width="1"/>
<rect x="835" y="710" width="5" height="11" fill="#666"/>
<path d="M890 715.5h7.500M893.7 711.700v7.600" stroke="#555" stroke-width="2"/>

<!-- ===== red annotations ===== -->
<g fill="none" stroke="#ff0000" stroke-width="3">
  <rect x="242.4" y="162.400" width="73.2" height="40" rx="11.5"/>
  <rect x="80.5" y="235.100" width="82.2" height="37.300" rx="10.5"/>
  <path d="M167.500 241.800L236 214.200"/>
</g>
<path d="M256.100 206.200L226 210.250L233.500 215L231.400 223.900z" fill="#ff0000"/>
</svg>

</body></html>
